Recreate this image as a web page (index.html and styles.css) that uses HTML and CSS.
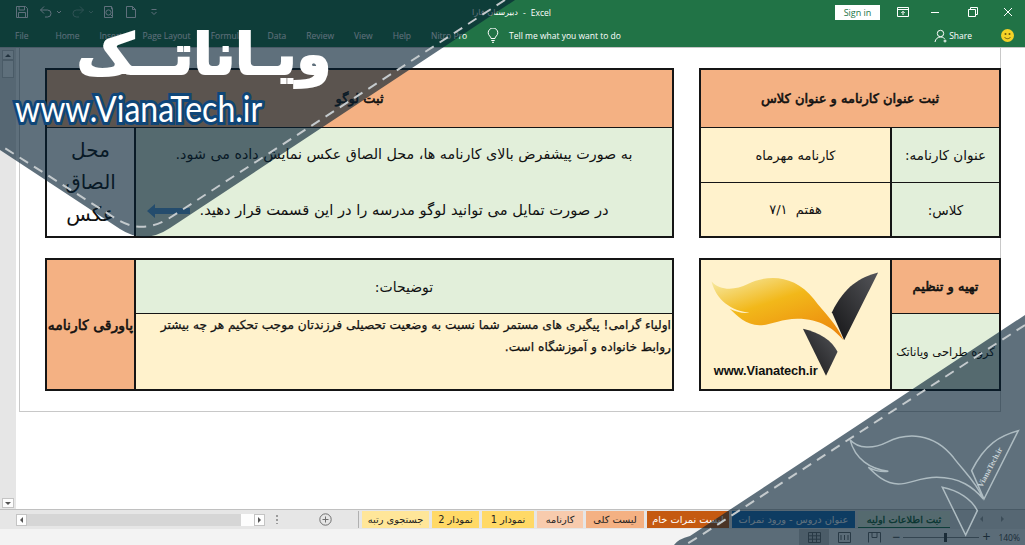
FILE: index.html
```html
<!DOCTYPE html>
<html lang="fa">
<head>
<meta charset="utf-8">
<title>دبیرستان فارا - Excel</title>
<link rel="stylesheet" href="styles.css">
</head>
<body>
<div class="app">
  <header class="titlebar">
    <div class="qat">
      <svg class="qi" width="14" height="14" viewBox="0 0 14 14"><path d="M1.5 1.5h9l2 2v9h-11z M4 1.5v3.5h5.5v-3.5 M3.5 12.5v-5h7v5"/></svg>
      <svg class="qi q-undo" width="14" height="14" viewBox="0 0 14 14"><path d="M1.5 5h7a3.5 3.5 0 0 1 0 7H6 M5 1.5 1.5 5 5 8.5"/></svg>
      <svg class="qi q-caret" width="6" height="14" viewBox="0 0 6 14"><path d="M1 6l2 2 2-2"/></svg>
      <svg class="qi q-redo" width="14" height="14" viewBox="0 0 14 14"><path d="M12.5 5h-7a3.5 3.5 0 0 0 0 7H8 M9 1.5 12.5 5 9 8.5"/></svg>
      <svg class="qi q-caret q-dim" width="6" height="14" viewBox="0 0 6 14"><path d="M1 6l2 2 2-2"/></svg>
      <svg class="qi q-prev" width="14" height="14" viewBox="0 0 14 14"><path d="M9.5 1.5h-7v11h8V4z M9.5 1.5V4h1"/><circle cx="6.5" cy="7.5" r="2.6"/><path d="M8.4 9.4l2.6 2.6"/></svg>
      <svg class="qi q-new" width="12" height="14" viewBox="0 0 12 14"><path d="M1.5 1.5h6l3 3v8h-9z M7.5 1.5v3h3"/></svg>
      <svg class="qi q-more" width="8" height="14" viewBox="0 0 8 14"><path d="M1.5 4.5h5 M1.5 7l2.5 2.5L6.5 7"/></svg>
    </div>
    <div class="doc-title"><span dir="rtl">دبیرستان فارا</span><span>-</span><span>Excel</span></div>
    <div class="winctl">
      <button class="signin">Sign in</button>
      <svg class="wi wi-display" width="12" height="10" viewBox="0 0 12 10"><path d="M.5.5h11v9H.5z M.5 2.5h11 M6 8V4.5 M4.3 6 6 4.3 7.7 6"/></svg>
      <svg class="wi wi-min" width="10" height="10" viewBox="0 0 10 10"><path d="M1 5.5h8"/></svg>
      <svg class="wi wi-max" width="10" height="10" viewBox="0 0 10 10"><path d="M.5 2.5h7v7h-7z M2.5 2.5v-2h7v7h-2"/></svg>
      <svg class="wi wi-close" width="10" height="10" viewBox="0 0 10 10"><path d="M1 1l8 8 M9 1l-8 8"/></svg>
    </div>
  </header>
  <nav class="ribbon">
    <span class="rtab rtab-file">File</span>
    <span class="rtab">Home</span>
    <span class="rtab">Insert</span>
    <span class="rtab">Page Layout</span>
    <span class="rtab">Formulas</span>
    <span class="rtab">Data</span>
    <span class="rtab">Review</span>
    <span class="rtab">View</span>
    <span class="rtab">Help</span>
    <span class="rtab">Nitro Pro</span>
    <svg class="bulb" width="12" height="15" viewBox="0 0 12 15"><path d="M4 10.5c0-2-2.8-3-2.8-5.7a4.8 4.8 0 0 1 9.6 0c0 2.700-2.800 3.700-2.800 5.700z M4.300 12.500h3.400 M5 14.300h2"/></svg>
    <span class="tellme">Tell me what you want to do</span>
    <span class="share">
      <svg class="share-ic" width="14" height="14" viewBox="0 0 14 14"><circle cx="6.500" cy="4.500" r="3.200"/><path d="M1 13c.5-3 2.500-5 5.500-5s3.500 1 4 2 M11 10.500v3 M9.500 12h3"/></svg>
      Share
    </span>
    <svg class="smile" width="13" height="13" viewBox="0 0 13 13"><circle cx="6.500" cy="6.500" r="6.500" fill="#f5d327"/><circle cx="4.500" cy="5" r="1" fill="#6b5a10"/><circle cx="8.500" cy="5" r="1" fill="#6b5a10"/><path d="M3.500 8.200c1.500 2 4.500 2 6 0" fill="none" stroke="#6b5a10"/></svg>
  </nav>

  <main class="workspace">
    <aside class="vscroll">
      <div class="vbtn"><span class="tri tri-up"></span></div>
      <div class="vthumb"></div>
      <div class="vtrack"></div>
      <div class="vbtn"><span class="tri tri-down"></span></div>
    </aside>
    <section class="page">
      <div class="sheet-row row-top" dir="rtl">
        <div class="tbl tbl-right t1">
          <div class="cell peach head span2">ثبت عنوان کارنامه و عنوان کلاس</div>
          <div class="cell green label">عنوان کارنامه:</div>
          <div class="cell cream value">کارنامه مهرماه</div>
          <div class="cell green label">کلاس:</div>
          <div class="cell cream value">هفتم&nbsp;&nbsp;۷/۱</div>
        </div>
        <div class="tbl tbl-left t2">
          <div class="cell peach head span2">ثبت لوگو</div>
          <div class="cell green notes">
            <p class="note1">به صورت پیشفرض بالای کارنامه ها، محل الصاق عکس نمایش داده می شود.</p>
            <p class="note2">در صورت تمایل می توانید لوگو مدرسه را در این قسمت قرار دهید.</p>
            <svg class="arrow" width="43" height="14" viewBox="0 0 43 14"><path d="M0 7 8 0v4h35v6H8v4z"/></svg>
          </div>
          <div class="cell white photo">محل<br>الصاق<br>عکس</div>
        </div>
      </div>
      <div class="sheet-row row-bottom" dir="rtl">
        <div class="tbl tbl-right t3">
          <div class="cell peach head">تهیه و تنظیم</div>
          <div class="cell cream logo-cell r2">
            <svg class="logo" viewBox="58 24 573 400" width="190" height="132">
              <defs>
                <linearGradient id="fl" x1="0.15" y1="0" x2="0.85" y2="1">
                  <stop offset="0" stop-color="#f6e596"/>
                  <stop offset=".4" stop-color="#f2b81a"/>
                  <stop offset="1" stop-color="#ec860c"/>
                </linearGradient>
                <linearGradient id="bk" x1="1" y1="0" x2="0" y2="1">
                  <stop offset="0" stop-color="#55565a"/>
                  <stop offset="1" stop-color="#141416"/>
                </linearGradient>
              </defs>
              <path fill="url(#fl)" d="M90 92C115 120 160 120 200 100C260 70 340 70 400 145C430 185 470 220 490 270C460 235 420 205 350 205C300 205 270 225 235 225C195 225 165 195 145 175C165 185 185 190 205 187C150 180 105 150 90 92Z"/>
              <path fill="url(#bk)" d="M595 65C540 80 495 105 455 185L492 270Z"/>
              <path fill="url(#bk)" d="M367 235C415 245 455 270 472 305L437 378Z"/>
              <text class="logo-text" x="97" y="377" textLength="315">www.Vianatech.ir</text>
            </svg>
          </div>
          <div class="cell green group">گروه طراحی ویاناتک</div>
        </div>
        <div class="tbl tbl-left t4">
          <div class="cell green desc-title">توضیحات:</div>
          <div class="cell peach head footer-label r2">پاورقی کارنامه</div>
          <div class="cell cream desc">اولیاء گرامی! پیگیری های مستمر شما نسبت به وضعیت تحصیلی فرزندتان موجب تحکیم هر چه بیشتر روابط خانواده و آموزشگاه است.</div>
        </div>
      </div>
    </section>
  </main>

  <div class="tabbar">
    <div class="hscroll">
      <div class="hbtn"><span class="tri tri-left"></span></div>
      <div class="htrack"></div>
      <div class="hthumb"></div>
      <div class="hbtn"><span class="tri tri-right"></span></div>
    </div>
    <span class="dots"></span>
    <svg class="addsheet" width="13" height="13" viewBox="0 0 13 13"><circle cx="6.500" cy="6.500" r="5.700"/><path d="M6.500 3.500v6 M3.500 6.500h6"/></svg>
    <div class="tabs" dir="rtl">
      <span class="tab tab-active">ثبت اطلاعات اولیه</span>
      <span class="tab tab-blue">عنوان دروس - ورود نمرات</span>
      <span class="tab tab-orange">لیست نمرات خام</span>
      <span class="tab tab-peach">لیست کلی</span>
      <span class="tab tab-light">کارنامه</span>
      <span class="tab tab-gold1">نمودار 1</span>
      <span class="tab tab-gold2">نمودار 2</span>
      <span class="tab tab-pale">جستجوی رتبه</span>
    </div>
    <div class="tabnav"><span class="tri tri-left dim"></span><span class="tri tri-right dim"></span></div>
  </div>

  <footer class="status">
    <div class="view view-on"><svg width="13" height="11" viewBox="0 0 13 11"><path d="M.5.500h12v10H.5z M.5 3.800h12 M.5 7.200h12 M4.500.5v10 M8.500.5v10"/></svg></div>
    <div class="view"><svg width="13" height="11" viewBox="0 0 13 11"><path d="M.5.500h12v10H.5z M3 3v5 M6.500 3v5 M10 3v5"/></svg></div>
    <div class="view"><svg width="13" height="11" viewBox="0 0 13 11"><path d="M.5 10.500V.5h12v10 M4 .5v5h5v-5"/></svg></div>
    <div class="zoomer">
      <span class="zbtn">−</span>
      <div class="zslider"><span class="zthumb"></span></div>
      <span class="zbtn">+</span>
      <span class="zval">140%</span>
    </div>
  </footer>

  <svg class="banner" width="1025" height="545" viewBox="0 0 1025 545">
    <path class="band" d="M0 0H515L170 228Q144.500 245 120 229L0 150Z"/>
    <path class="dash" d="M505 0L168 219Q142 234 118 220L0 145"/>
    <path class="band" d="M1025 315V545H674Q678 539 690 536Z"/>
    <path class="dash" d="M1025 325L700 536Q692 541 685 545"/>
    <g class="mark" transform="translate(820 409) scale(.3333)">
      <path d="M90 92C115 120 160 120 200 100C260 70 340 70 400 145C430 185 470 220 490 270C460 235 420 205 350 205C300 205 270 225 235 225C195 225 165 195 145 175C165 185 185 190 205 187C150 180 105 150 90 92Z"/>
      <path d="M595 65C540 80 495 105 455 185L492 270Z"/>
      <path d="M367 235C415 245 455 270 472 305L437 378Z"/>
    </g>
    <text class="mark-text" transform="translate(982 488) rotate(-62)">VianaTech.ir</text>
  </svg>
  <div class="brand" dir="rtl">ویـاناتــک</div>
  <div class="brand-url">www.VianaTech.ir</div>
</div>
</body>
</html>
```

FILE: styles.css
```css
* { box-sizing: border-box; }
html, body { margin: 0; padding: 0; }
body { font-family: "DejaVu Sans", sans-serif; background: #fff; }
p { margin: 0; }

.app { position: relative; width: 1025px; height: 545px; overflow: hidden; display: flex; flex-direction: column; background: #fff; }

/* title bar */
.titlebar { height: 24px; background: #217346; display: flex; align-items: center; color: #fff; font: 8.500px "Open Sans", sans-serif; flex: none; }
.qat { display: flex; align-items: center; padding-left: 15px; width: 472px; flex: none; }
.qi { fill: none; stroke: #fff; stroke-width: 1; }
.q-undo { margin-left: 10px; }
.q-caret { margin-left: 3px; }
.q-redo { margin-left: 9px; opacity: .4; }
.q-dim { opacity: .4; }
.q-prev { margin-left: 8px; }
.q-new { margin-left: 9px; }
.q-more { margin-left: 13px; }
.doc-title { display: flex; gap: 5px; width: 90px; flex: none; white-space: nowrap; }
.doc-title span:first-child { font-family: "DejaVu Sans", sans-serif; font-size: 8.200px; }
.winctl { margin-left: auto; display: flex; align-items: center; }
.signin { width: 45px; height: 15px; padding: 0; border: 0; background: #fff; color: #217346; font: 9px "Open Sans", sans-serif; margin-right: 17px; }
.wi { fill: none; stroke: #fff; stroke-width: 1; }
.wi-display { margin-right: 21px; }
.wi-min { margin-right: 28px; }
.wi-max { margin-right: 25px; }
.wi-close { margin-right: 12px; }

/* ribbon */
.ribbon { height: 24px; background: #217346; display: flex; align-items: center; gap: 20px; padding-left: 15px; color: #fff; font: 8.500px "Open Sans", sans-serif; flex: none; border-bottom: 1px solid #c6c6c6; }
.rtab-file { margin-right: 7px; }
.rtab { white-space: nowrap; }
.bulb { fill: none; stroke: #fff; margin-right: -10px; }
.tellme { white-space: nowrap; }
.share { margin-left: auto; display: flex; align-items: center; gap: 1px; }
.share-ic { fill: none; stroke: #fff; }
.smile { margin-left: 9px; margin-right: 11px; }

/* workspace */
.workspace { height: 462px; display: flex; background: #fff; flex: none; border-bottom: 1px solid #c0c0c0; }
.vscroll { width: 16px; background: #e6e6e6; display: flex; flex-direction: column; align-items: center; padding: 2px 2px 1px; flex: none; }
.vbtn { width: 12px; height: 10px; background: #fdfdfd; border: 1px solid #c4c4c4; display: flex; align-items: center; justify-content: center; flex: none; }
.vthumb { width: 12px; height: 18px; background: #fdfdfd; border: 1px solid #c4c4c4; flex: none; }
.vtrack { flex: 1; }
.tri { display: block; width: 0; height: 0; border-style: solid; border-color: transparent; }
.tri-up { border-width: 0 3px 3px; border-bottom-color: #555; }
.tri-down { border-width: 3px 3px 0; border-top-color: #555; }
.tri-left { border-width: 3px 3px 3px 0; border-right-color: #555; }
.tri-right { border-width: 3px 0 3px 3px; border-left-color: #555; }
.tri.dim { opacity: .5; }

.page { margin-left: 3px; width: 982px; height: 364px; border-left: 1px solid #c8c8c8; border-right: 1px solid #c8c8c8; border-bottom: 1px solid #c8c8c8; padding: 20px 0 0 25px; display: flex; flex-direction: column; gap: 20px; flex: none; }
.sheet-row { display: flex; gap: 25px; justify-content: flex-start; margin-right: -1px; }

/* tables */
.tbl { display: grid; background: #151515; border: 2px solid #151515; column-gap: 2px; row-gap: 1px; flex: none; color: #111; }
.tbl-right { width: 302px; }
.tbl-left { width: 629px; }
.row-top .tbl { height: 170px; }
.row-bottom .tbl { height: 133px; }
.t1 { grid-template-columns: 107px 1fr; grid-template-rows: 57px 54px 1fr; }
.t2 { grid-template-columns: 1fr 87px; grid-template-rows: 57px 1fr; }
.t3 { grid-template-columns: 107px 1fr; grid-template-rows: 53px 1fr; }
.t4 { grid-template-columns: 1fr 87px; grid-template-rows: 53px 1fr; }
.cell { display: flex; align-items: center; justify-content: center; text-align: center; min-width: 0; min-height: 0; }
.span2 { grid-column: span 2; }
.r2 { grid-row: span 2; }
.peach { background: #f4b183; }
.green { background: #e2efda; }
.cream { background: #fff2cc; }
.white { background: #fff; }
.head { font-size: 13px; -webkit-text-stroke: .6px #111; white-space: nowrap; }
.footer-label { font-size: 14px; }
.label { font-size: 13.500px; }
.value { font-size: 13px; }
.notes { position: relative; flex-direction: column; }
.notes p { white-space: nowrap; }
.note1 { font-size: 14.300px; }
.note2 { font-size: 14.700px; margin-top: 39px; }
.arrow { position: absolute; left: 11px; bottom: 18px; fill: #5b9bd5; }
.photo { font-size: 20px; line-height: 32px; }
.desc-title { font-size: 14px; }
.desc { display: block; text-align: right; font-size: 12.200px; line-height: 22px; padding: 0 1px 0 10px; -webkit-text-stroke: .25px #111; }
.logo-cell { overflow: hidden; }
.logo { display: block; direction: ltr; }
.logo-text { font: bold 39px "Liberation Sans", sans-serif; fill: #111; }
.group { font-size: 11.500px; white-space: nowrap; }

/* sheet tabs */
.tabbar { height: 19px; background: #e6e6e6; display: flex; align-items: center; padding-left: 16px; position: relative; flex: none; }
.hscroll { width: 249px; height: 12px; display: flex; flex: none; }
.hbtn { width: 11px; background: #fdfdfd; border: 1px solid #c4c4c4; display: flex; align-items: center; justify-content: center; flex: none; }
.htrack { flex: 1; background: #d6d6d6; }
.hthumb { width: 13px; background: #fdfdfd; flex: none; }
.dots { width: 2px; height: 9px; margin-left: 11px; background: repeating-linear-gradient(#9a9a9a 0 2px, transparent 2px 4px); flex: none; }
.addsheet { margin-left: 41px; fill: none; stroke: #707070; stroke-width: 1; flex: none; }
.tabs { display: flex; flex-direction: row-reverse; direction: ltr; margin-left: 26px; padding-left: 3px; height: 17px; gap: 3px; border-left: 1px solid #b0b0b0; font-size: 9.800px; flex: none; align-self: flex-start; margin-top: 1px; }
.tab { display: flex; align-items: center; justify-content: center; height: 17px; white-space: nowrap; color: #222; }
.tab-active { width: 92px; background: #e2efda; color: #0e5a2c; -webkit-text-stroke: .3px #0e5a2c; border-bottom: 1px solid #217346; }
.tab-blue { width: 123px; background: #1f6fb8; color: #fff; }
.tab-orange { width: 82px; background: #c55a11; color: #fff; }
.tab-peach { width: 58px; background: #f4b183; }
.tab-light { width: 46px; background: #f8cbad; }
.tab-gold1 { width: 52px; background: #ffd966; }
.tab-gold2 { width: 47px; background: #ffd966; }
.tab-pale { width: 67px; background: #ffe699; }
.tabnav { position: absolute; right: 21px; top: 6px; display: flex; gap: 18px; }

/* status bar */
.status { flex: 1; background: #f3f3f3; display: flex; justify-content: flex-end; align-items: stretch; padding-right: 5px; }
.view { width: 30px; display: flex; align-items: center; justify-content: center; }
.view svg { fill: none; stroke: #666; }
.view-on { background: #c8c8c8; }
.zoomer { display: flex; align-items: center; margin-left: 2px; color: #444; font: 8.500px "Open Sans", sans-serif; }
.zbtn { font-size: 14px; line-height: 14px; width: 10px; text-align: center; }
.zslider { position: relative; width: 76px; height: 1px; background: #888; margin: 0 2px; }
.zthumb { position: absolute; left: 41px; top: -4px; width: 3px; height: 9px; background: #444; }
.zval { margin-left: 7px; }

/* watermark banner */
.banner { position: absolute; left: 0; top: 0; pointer-events: none; }
.band { fill: rgba(5, 31, 50, .64); }
.dash { fill: none; stroke: #c4cacd; stroke-width: 2; stroke-dasharray: 10 7; }
.mark path { fill: none; stroke: #aebcc2; stroke-width: 4.500; }
.mark-text { font: bold 8px "Liberation Serif", serif; fill: #c8d2d6; }
.brand { position: absolute; left: 80px; top: 15px; width: 248px; display: flex; justify-content: center; font-size: 56px; line-height: 80px; font-weight: bold; color: #fff; white-space: nowrap; -webkit-text-stroke: 2px #fff; }
.brand-url { position: absolute; left: 15px; top: 86px; font: 36px "Lato", sans-serif; color: #fff; white-space: nowrap; -webkit-text-stroke: 6px #0f4678; paint-order: stroke fill; transform: scaleX(.89); transform-origin: left center; }
```
